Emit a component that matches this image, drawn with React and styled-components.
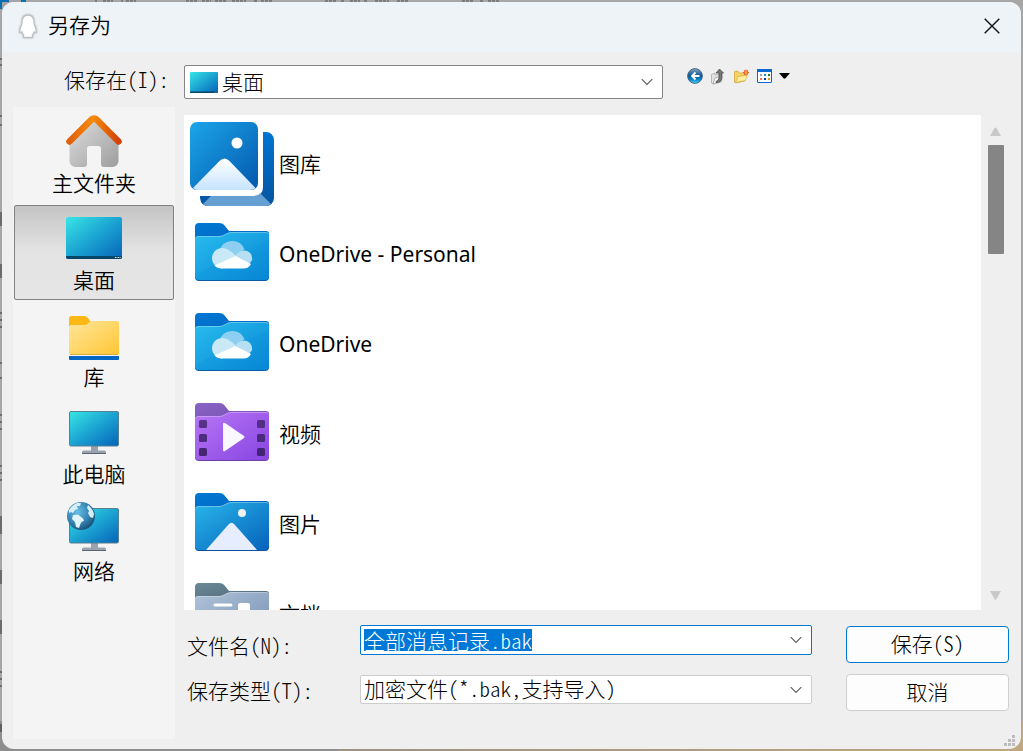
import React, { useEffect, useRef } from "react";
import styled, { createGlobalStyle, css } from "styled-components";

const ui = `"Noto Sans", "Noto Sans CJK SC", sans-serif`;
const form = `"Noto Sans CJK SC", sans-serif`;

const GlobalStyle = createGlobalStyle`
  *, *::before, *::after { box-sizing: border-box; }
  html, body, #root { height: 100%; margin: 0; }
  body { background: #a6a6a6; color: #000; overflow: hidden; }
  button, input, select { font: inherit; color: inherit; margin: 0; }
`;

const Backdrop = styled.div`
  position: relative;
  display: flex;
  height: 100%;
  min-height: 480px;
  padding: 2px;
  background: linear-gradient(90deg, #8e8e8e 33%, #a09080 33%, #bfa880) bottom / 100% 30px no-repeat, #a6a6a6;
`;

const BackdropTraces = styled.svg`
  position: absolute;
  left: 0;
  top: 0;
`;

const Dialog = styled.main`
  position: relative;
  flex: 1;
  display: flex;
  flex-direction: column;
  min-width: 0;
  background: #efefef;
  border-radius: 12px;
  overflow: hidden;
`;

const TitleBar = styled.header`
  display: flex;
  align-items: center;
  height: 50px;
  padding: 0 12px 2px 14px;
  gap: 8px;
  background: #eef3f8;
`;

const Title = styled.h1`
  flex: 1;
  margin: 0;
  padding-bottom: 2px;
  font: 350 21px/28px ${ui};
`;

const PlainButton = styled.button`
  display: grid;
  place-items: center;
  padding: 0;
  border: 0;
  background: none;
`;

const CloseButton = styled(PlainButton)`
  width: 34px;
  height: 34px;
`;

const TopRow = styled.div`
  display: flex;
  height: 55px;
  padding: 13px 0 8px;
  font: 300 21px/28px ${form};
  font-feature-settings: "hwid";
`;

const LookInLabel = styled.label`
  width: 182px;
  padding-left: 62px;
`;

const Combo = styled.div`
  position: relative;
  display: flex;
  align-items: center;
  flex: 1;
  min-width: 0;
  min-height: ${(p) => p.$height}px;
  max-height: ${(p) => p.$height}px;
  background: #fff;
  border: 1px solid ${(p) => p.$border};
  border-radius: 2px;
  padding-left: ${(p) => p.$pad}px;
  gap: 4px;
`;

const field = css`
  flex: 1;
  min-width: 0;
  width: 100%;
  padding: 0;
  border: 0;
  outline: 0;
  background: none;
  appearance: none;
  font-feature-settings: "hwid";
`;

const Select = styled.select`
  ${field}
  height: 100%;
  padding-bottom: 3px;
  line-height: 24px;
`;

const TextInput = styled.input`
  ${field}
  height: 22px;
  line-height: 22px;
  &::selection { background: #0078d7; color: #fff; }
`;

const ChevronBox = styled.span`
  display: grid;
  place-items: center;
  width: 30px;
  pointer-events: none;
  position: absolute;
  right: 0;
`;

const ChevronButton = styled(PlainButton)`
  width: 30px;
  height: 28px;
`;

const Toolbar = styled.div`
  display: flex;
  align-items: center;
  height: 22px;
  width: 358px;
  padding-left: 24px;
  gap: 7px;
`;

const Body = styled.div`
  flex: 1;
  display: flex;
  min-height: 0;
`;

const Places = styled.nav`
  display: flex;
  flex-direction: column;
  gap: 2px;
  width: 162px;
  margin: 0 9px 10px 11px;
  padding-top: 1px;
  background: #f4f4f4;
`;

const Place = styled.button`
  display: flex;
  flex-direction: column;
  align-items: center;
  height: 95px;
  margin: 0 1px;
  padding: 5px 0 0;
  border: 1px solid ${(p) => (p.$active ? "#808080" : "transparent")};
  border-radius: 2px;
  background: ${(p) => (p.$active ? "linear-gradient(#c4c4c4, #e3e3e3 48%, #e5e5e5)" : "none")};
  font: 350 21px/30px ${ui};
`;

const PlaceIcon = styled.span`
  display: grid;
  place-items: center;
  height: 54px;
`;

const Main = styled.div`
  flex: 1;
  display: flex;
  flex-direction: column;
  min-width: 0;
  min-height: 0;
  padding-top: 8px;
`;

const ListArea = styled.div`
  flex: 1;
  display: flex;
  min-height: 0;
`;

const FileList = styled.ul`
  flex: 1;
  margin: 0;
  padding: 3px 0 0 5px;
  list-style: none;
  background: #fff;
  overflow: hidden;
`;

const FileItem = styled.li`
  display: flex;
  align-items: center;
  gap: 4px;
  height: 90px;
  font: ${(p) => (p.$latin ? 400 : 350)} 21px/32px ${ui};
`;

const FileName = styled.span`
  padding-top: 2px;
`;

const Scrollbar = styled.div`
  display: flex;
  flex-direction: column;
  align-items: center;
  width: 40px;
  padding: 12px 11px 10px 0;
`;

const Track = styled.div`
  flex: 1;
  padding-top: 9px;
`;

const Thumb = styled.div`
  width: 16px;
  height: 109px;
  border-radius: 1px;
  background: #858585;
`;

const Footer = styled.form`
  display: flex;
  padding: 15px 12px 38px 3px;
  font: 300 21px/30px ${form};
  font-feature-settings: "hwid";
`;

const Labels = styled.div`
  display: flex;
  flex-direction: column;
  width: 173px;
  gap: 15px;
  padding-top: 5px;
`;

const Fields = styled.div`
  flex: 1;
  display: flex;
  flex-direction: column;
  gap: 20px;
  min-width: 0;
`;

const Actions = styled.div`
  display: flex;
  flex-direction: column;
  width: 163px;
  margin-left: 34px;
  gap: 11px;
  padding-top: 1px;
`;

const ActionButton = styled.button`
  height: 37px;
  padding: 0 0 4px;
  border: 1px solid ${(p) => (p.$primary ? "#0078d4" : "#cfcfcf")};
  border-radius: 4px;
  background: #fdfdfd;
  font-feature-settings: "hwid";
`;

const Grip = styled.svg`
  position: absolute;
  right: 5px;
  bottom: 2px;
`;

const Chevron = () => (
  <svg width="12" height="8" viewBox="0 0 12 8" fill="none" stroke="#5c5c5c" strokeWidth="1.1">
    <path d="M.7 1.2 6 6.5l5.3-5.3" />
  </svg>
);

const Penguin = () => (
  <svg width="24" height="28" viewBox="0 0 24 28">
    <path d="M12 3C8 3 6 6 6 10.500c0 2.500-2.300 5.500-2.300 9 0 1.600 1.200 1.500 2.300.3.300 1.500.9 2.500 1.800 3.300-.8.600-.8 2.400.7 2.400h7c1.500 0 1.500-1.800.7-2.400.9-.8 1.500-1.800 1.800-3.300 1.100 1.200 2.300 1.300 2.300-.3 0-3.500-2.300-6.500-2.300-9C18 6 16 3 12 3Z" fill="#fff" stroke="#dcdfe1" strokeWidth="3.500" strokeLinejoin="round" />
    <path d="M12 3C8 3 6 6 6 10.500c0 2.500-2.300 5.500-2.300 9 0 1.600 1.200 1.500 2.300.3.300 1.500.9 2.500 1.800 3.300-.8.600-.8 2.400.7 2.400h7c1.500 0 1.500-1.800.7-2.400.9-.8 1.500-1.800 1.800-3.300 1.100 1.200 2.300 1.300 2.300-.3 0-3.500-2.300-6.500-2.300-9C18 6 16 3 12 3Z" fill="#fff" stroke="#bdbfc1" strokeWidth="1.300" strokeLinejoin="round" />
  </svg>
);

const Screen = ({ w = 56, h = 42 }) => (
  <svg width={w} height={h} viewBox="0 0 56 42" preserveAspectRatio="none">
    <defs>
      <linearGradient id="desk" x1="0" y1="0" x2="1" y2="1">
        <stop stopColor="#38e6e6" />
        <stop offset=".5" stopColor="#1ba3d2" />
        <stop offset="1" stopColor="#0563b8" />
      </linearGradient>
    </defs>
    <rect width="56" height="42" rx="2" fill="url(#desk)" />
    <path d="M0 39h56v1a2 2 0 0 1-2 2H2a2 2 0 0 1-2-2Z" fill="#064668" />
    <path d="M49 40.500h1.500m1 0H53m.6 0h1" stroke="#d5ecf7" />
  </svg>
);

const Home = () => (
  <svg width="58" height="54" viewBox="0 0 58 54">
    <defs>
      <linearGradient id="wall" x1="0" y1="0" x2="1" y2="1">
        <stop stopColor="#e0e0e0" />
        <stop offset="1" stopColor="#9d9d9d" />
      </linearGradient>
      <linearGradient id="roof" x1="0" y1="0" x2="1" y2="0">
        <stop stopColor="#e2600c" />
        <stop offset=".48" stopColor="#f58b0b" />
        <stop offset="1" stopColor="#d24105" />
      </linearGradient>
    </defs>
    <path d="M29 5 4.500 27v20a6 6 0 0 0 6 6H19a3 3 0 0 0 3-3V35a3 3 0 0 1 3-3h8a3 3 0 0 1 3 3v15a3 3 0 0 0 3 3h8.500a6 6 0 0 0 6-6V27Z" fill="url(#wall)" />
    <path d="M4.500 27.500 26.500 5.600a3.500 3.500 0 0 1 5 0l22 21.900" fill="none" stroke="url(#roof)" strokeWidth="6.500" strokeLinecap="round" />
  </svg>
);

const Library = () => (
  <svg width="50" height="50" viewBox="0 -6 50 50">
    <defs>
      <linearGradient id="lib" x1="0" y1="0" x2="1" y2="1">
        <stop stopColor="#ffe69c" />
        <stop offset="1" stopColor="#ffc633" />
      </linearGradient>
    </defs>
    <path d="M0 12V2.500Q0 0 2.500 0H15q2.500 0 4 2l3 4-2 6Z" fill="#fcb814" />
    <path d="M0 11q0-2 2-2h13q2 0 4-1.500Q21 5 23 5h25q2 0 2 2v30q0 2-2 2H2q-2 0-2-2Z" fill="url(#lib)" />
    <path d="M1 38.500h48" stroke="#d7aa3d" />
    <path d="M0 40h50v3a1 1 0 0 1-1 1H1a1 1 0 0 1-1-1Z" fill="#0067c7" />
  </svg>
);

const MonitorShape = () => (
  <>
    <defs>
      <linearGradient id="mon" x1="0" y1="0" x2="1" y2="1">
        <stop stopColor="#38e6e6" />
        <stop offset=".5" stopColor="#1ba3d2" />
        <stop offset="1" stopColor="#0563b8" />
      </linearGradient>
    </defs>
    <path d="M25 42h7v7h-7Z" fill="#9aa3ad" />
    <path d="M16 48q0-1.500 1.500-1.500h21Q40 46.500 40 48v2H16Z" fill="#9aa3ad" />
    <path d="M16 49.500h24" stroke="#596572" />
    <rect x="3.500" y="7.500" width="49" height="34.500" rx="1.500" fill="url(#mon)" stroke="#587f92" />
  </>
);

const Monitor = () => (
  <svg width="56" height="54" viewBox="0 1 56 54"><MonitorShape /></svg>
);

const Network = () => (
  <svg width="56" height="54" viewBox="0 1 56 54">
    <defs>
      <radialGradient id="globe" cx=".38" cy=".35" r=".7">
        <stop stopColor="#67bfe6" />
        <stop offset=".6" stopColor="#3583b2" />
        <stop offset="1" stopColor="#174e74" />
      </radialGradient>
    </defs>
    <MonitorShape />
    <circle cx="15" cy="15" r="14" fill="url(#globe)" />
    <path d="M3 9q3-5 8-7l4 0-1 3-3 0 1 3-3 1-2 3-2-1-2 1Z" fill="#d7eef5" />
    <path d="M22 4q5 4 6 9l-1 4-3-1-2-4 1-2-2-3Z" fill="#d7eef5" />
    <path d="m7 14 5-.5 5 4 1 2-3 2-2 5.500-3-1-1-5-3-3Z" fill="#e2f3f6" />
  </svg>
);

const folderTones = {
  blue: ["#0078d4", "#0062bd", "#29bdef", "#0684d2", "#0a5ba8"],
  picture: ["#0078d4", "#0062bd", "#29b6ea", "#0561bb", "#0a4fa0"],
  purple: ["#8a62c6", "#7451ad", "#b776f5", "#8845e2", "#6a41a8"],
  slate: ["#6c8794", "#4b6577", "#b0c2d6", "#7592b6", "#56697d"],
};

const Folder = ({ tone, id, children }) => {
  const [tabA, tabB, faceA, faceB, edge] = folderTones[tone];
  return (
    <svg width="86" height="86" viewBox="0 0 86 86">
      <defs>
        <linearGradient id={`${id}t`} x1="0" y1="0" x2="1" y2="1"><stop stopColor={tabA} /><stop offset="1" stopColor={tabB} /></linearGradient>
        <linearGradient id={`${id}f`} x1="0" y1="0" x2="1" y2="1"><stop stopColor={faceA} /><stop offset="1" stopColor={faceB} /></linearGradient>
      </defs>
      <path d="M6 30V17q0-4 4-4h20q4 0 6 3l4 5h37q3 0 3 3v10Z" fill={`url(#${id}t)`} />
      <path d="M6 29q0-3 3-3h21q3 0 6-2t6-2h35q3 0 3 3v42q0 4-4 4H10q-4 0-4-4Z" fill={edge} />
      <path d="M6 28.500q0-2.500 3-2.500h21q3 0 6-2t6-2h35q3 0 3 3v41q0 4-4 4H10q-4 0-4-4Z" fill={`url(#${id}f)`} />
      <path d="M7 28q1-1.500 3-1.500h20q3.500 0 6.500-2t6-2H77q2 0 2.500 1.500" fill="none" stroke="#fff" strokeOpacity=".3" />
      {children}
    </svg>
  );
};

const Cloud = () => (
  <>
    <path d="M6 64 80 31v35q0 4-4 4H10q-4 0-4-4Z" fill="#078ddb" fillOpacity=".22" />
    <path d="M30.500 40a13.500 13.500 0 0 1 25-1L46 47Z" fill="#8ccff0" />
    <path d="M33 58.500a10.300 10.300 0 1 1 5.500-19.200q6 3 9.500 8.200Z" fill="#c9e9f6" />
    <path d="M45 47.500q4.500-7 10.500-7 8 1 7.700 9.500L60 54Z" fill="#b5dff3" />
    <path d="m25.500 55.500 21-9.500L62 54q-2.500 4.500-7.500 4.500H33q-5 0-7.500-3Z" fill="#fff" />
  </>
);

const Gallery = () => (
  <svg width="86" height="90" viewBox="0 0 86 90">
    <defs>
      <linearGradient id="galA" x1="0" y1="0" x2="1" y2="1"><stop stopColor="#1ca5e9" /><stop offset="1" stopColor="#0357ad" /></linearGradient>
      <linearGradient id="galB" x1="0" y1="0" x2="0" y2="1"><stop stopColor="#fff" /><stop offset="1" stopColor="#c6e4ff" /></linearGradient>
      <linearGradient id="galC" x1="0" y1="0" x2="0" y2="1"><stop stopColor="#0075d3" /><stop offset="1" stopColor="#07539f" /></linearGradient>
    </defs>
    <path d="M74 14h3a8 8 0 0 1 8 8v58a8 8 0 0 1-8 8H19q-7 0-8-8v-2h54q9 0 9-9Z" fill="url(#galC)" />
    <path d="m14 86 8-8h43q4 0 6-3l11 11q-2 2-5 2H19q-3 0-5-2Z" fill="#669fd2" />
    <rect x="1" y="4" width="68" height="68" rx="7" fill="url(#galA)" />
    <path d="M4 70 30.500 43q5-5 10 0L66.500 70q-2 2-5 2H8.500q-2.500 0-4.500-2Z" fill="url(#galB)" />
    <circle cx="48" cy="25" r="5.500" fill="#fff" />
  </svg>
);

const VideoFolder = () => (
  <Folder tone="purple" id="video">
    {[10, 68].map((x) => [30, 44, 58].map((y) => (
      <rect key={`${x}-${y}`} x={x} y={y} width="8" height="8" rx="1.500" fill="#3c2268" fillOpacity={0.6 + y / 180} />
    )))}
    <path d="M34 34q0-2 2-1l19 13q1 1 0 2L36 61q-2 1-2-1Z" fill="#fbf7ff" />
  </Folder>
);

const PictureFolder = () => (
  <Folder tone="picture" id="picture">
    <path d="M17 70 39.500 44.500q3-3.500 6 0L68 70Z" fill="#e6edff" />
    <circle cx="53" cy="33" r="4" fill="#f1f2f3" />
  </Folder>
);

const DocumentFolder = () => (
  <Folder tone="slate" id="document">
    <path d="M26 35h16m-16 9h16" stroke="#fff" strokeWidth="3" strokeLinecap="round" />
    <rect x="49" y="33" width="12" height="14" rx="2" fill="#fff" />
  </Folder>
);

const BackIcon = () => (
  <svg width="16" height="16" viewBox="0 0 16 16">
    <defs><linearGradient id="back" x1="0" y1="0" x2="0" y2="1"><stop stopColor="#83a8c5" /><stop offset=".48" stopColor="#0d568e" /><stop offset=".75" stopColor="#078bd0" /><stop offset="1" stopColor="#59d3f5" /></linearGradient></defs>
    <circle cx="8" cy="8" r="7.400" fill="url(#back)" stroke="#36586e" strokeWidth=".8" />
    <path d="M12.500 8H4.500m4-3.500L5 8l3.500 3.500" fill="none" stroke="#fff" strokeWidth="1.800" />
  </svg>
);

const UpIcon = () => (
  <svg width="16" height="17" viewBox="0 0 16 17">
    <path d="M1.500 6.500 5 5v2l5-1v8l-7 2-1.500-1Z" fill="#e3e3e3" stroke="#aaa" strokeWidth=".8" />
    <path d="m3 16 2-6 6-2v6Z" fill="#f8f8f8" stroke="#999" strokeWidth=".7" />
    <path d="M6 13.500q3-1 3-4.500V5H6L9.500 1l4 4H12v4.500q0 5-6 5Z" fill="#777" stroke="#444" strokeWidth=".7" />
  </svg>
);

const NewFolderIcon = () => (
  <svg width="17" height="16" viewBox="0 0 17 16">
    <path d="M1.500 4q0-.8.800-.8H5l1.500 1.800h5V13l-9 2-1-1Z" fill="#f5d364" stroke="#cf9c30" strokeWidth=".7" />
    <path d="m2.500 14.500 2.500-6 9-1.500-1.500 5.500Z" fill="#fff0a0" stroke="#dba735" strokeWidth=".7" />
    <path d="M13 1.500v6M10 4.500h6M11 2.500l4 4m0-4-4 4" stroke="#f05324" strokeWidth="1.100" />
    <circle cx="13" cy="4.500" r="1.300" fill="#ffb03a" />
  </svg>
);

const ViewIcon = () => (
  <svg width="15" height="14" viewBox="0 0 15 14">
    <rect x=".5" y=".5" width="14" height="13" rx=".5" fill="#fff" stroke="#0869cf" />
    <path d="M0 0h15v3H0Z" fill="#0869cf" />
    <path d="M3 5h2v2H3Z" fill="#9a9bc6" /><path d="M7 5h2v2H7Z" fill="#168cd8" /><path d="M11 5h2v2h-2Z" fill="#16851c" />
    <path d="M3 9h2v2H3Z" fill="#fa7051" /><path d="M7 9h2v2H7Z" fill="#063297" /><path d="M11 9h2v2h-2Z" fill="#d79b06" />
  </svg>
);

const Triangle = ({ down, color = "#c9c9c9", w = 11, h = 9 }) => (
  <svg width={w} height={h} viewBox="0 0 11 9" preserveAspectRatio="none">
    <path d={down ? "M0 0h11L6.500 8q-1 1-2 0Z" : "M0 9h11L6.500 1q-1-1-2 0Z"} fill={color} />
  </svg>
);

const places = [
  ["主文件夹", Home],
  ["桌面", Screen],
  ["库", Library],
  ["此电脑", Monitor],
  ["网络", Network],
];

const files = [
  ["图库", <Gallery />],
  ["OneDrive - Personal", <Folder tone="blue" id="personal"><Cloud /></Folder>],
  ["OneDrive", <Folder tone="blue" id="onedrive"><Cloud /></Folder>],
  ["视频", <VideoFolder />],
  ["图片", <PictureFolder />],
  ["文档", <DocumentFolder />],
];

export default function App() {
  const nameRef = useRef(null);
  useEffect(() => {
    nameRef.current.focus();
    nameRef.current.select();
  }, []);

  return (
    <Backdrop>
      <GlobalStyle />
      <BackdropTraces width="520" height="751" viewBox="0 0 520 751" fill="none" stroke="#555" aria-hidden="true">
        <path d="M0 1h9M1 1v8M21 1h5" stroke="#0b6fb5" strokeWidth="2" />
        <path d="M95 1h2m6 0h10m8 0h2m3 0h10M186 1h12m4 0h9m4 0h12m5 0h14m8 0h3m4 0h12M325 1h12m4 0h3m6 0h10m4 0h3m8 0h14m8 0h12M462 1h12m6 0h3m5 0h12" strokeDasharray="3 1" />
        <path d="M0 59h2m-2 6h2M0 116h2m-2 9h2M1 212v14M1 264v14M0 313h2m-2 7h2m-2 7h2M0 363h2m-2 15h2M0 415h2m-2 7h2m-2 7h2M0 466h2m-2 7h2m-2 7h2M1 516v18M1 570v14M1 620v14M0 672h2m-2 7h2m-2 7h2M1 724v8" stroke="#333" />
      </BackdropTraces>
      <Dialog>
        <TitleBar>
          <Penguin />
          <Title>另存为</Title>
          <CloseButton aria-label="关闭">
            <svg width="16" height="16" viewBox="0 0 16 16" stroke="#111" strokeWidth="1.400"><path d="m.7.7 14.600 14.600m0-14.600L.7 15.300" /></svg>
          </CloseButton>
        </TitleBar>
        <TopRow>
          <LookInLabel htmlFor="look-in">保存在(I):</LookInLabel>
          <Combo $height={34} $border="#858585" $pad={5}>
            <Screen w={28} h={21} />
            <Select id="look-in"><option>桌面</option></Select>
            <ChevronBox><Chevron /></ChevronBox>
          </Combo>
          <Toolbar>
            <PlainButton aria-label="后退"><BackIcon /></PlainButton>
            <PlainButton aria-label="向上一级"><UpIcon /></PlainButton>
            <PlainButton aria-label="新建文件夹"><NewFolderIcon /></PlainButton>
            <PlainButton aria-label="查看"><ViewIcon /></PlainButton>
            <PlainButton aria-label="查看选项"><Triangle down color="#000" w={11} h={6} /></PlainButton>
          </Toolbar>
        </TopRow>
        <Body>
          <Places aria-label="位置">
            {places.map(([name, Icon]) => (
              <Place key={name} $active={name === "桌面"}>
                <PlaceIcon><Icon /></PlaceIcon>
                {name}
              </Place>
            ))}
          </Places>
          <Main>
            <ListArea>
              <FileList>
                {files.map(([name, icon]) => (
                  <FileItem key={name} $latin={name.startsWith("OneDrive")}>
                    {icon}
                    <FileName>{name}</FileName>
                  </FileItem>
                ))}
              </FileList>
              <Scrollbar aria-hidden="true">
                <Triangle />
                <Track><Thumb /></Track>
                <Triangle down />
              </Scrollbar>
            </ListArea>
            <Footer onSubmit={(e) => e.preventDefault()}>
              <Labels>
                <label htmlFor="file-name">文件名(N):</label>
                <label htmlFor="file-type">保存类型(T):</label>
              </Labels>
              <Fields>
                <Combo $height={30} $border="#0078d4" $pad={3}>
                  <TextInput id="file-name" ref={nameRef} defaultValue="全部消息记录.bak" />
                  <ChevronButton type="button" aria-label="文件名列表"><Chevron /></ChevronButton>
                </Combo>
                <Combo $height={29} $border="#cccccc" $pad={3}>
                  <Select id="file-type"><option>加密文件(*.bak,支持导入)</option></Select>
                  <ChevronBox><Chevron /></ChevronBox>
                </Combo>
              </Fields>
              <Actions>
                <ActionButton $primary type="submit">保存(S)</ActionButton>
                <ActionButton type="button">取消</ActionButton>
              </Actions>
            </Footer>
          </Main>
        </Body>
        <Grip width="12" height="12" viewBox="0 0 12 12" fill="#bdbdbd" aria-hidden="true">
          <path d="M8 0h3v3H8ZM4 4h3v3H4Zm4 0h3v3H8ZM0 8h3v3H0Zm4 0h3v3H4Zm4 0h3v3H8Z" />
        </Grip>
      </Dialog>
    </Backdrop>
  );
}
